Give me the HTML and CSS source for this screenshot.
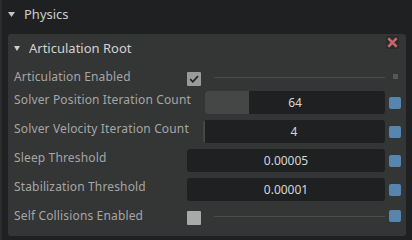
FILE: index.html
```html
<!DOCTYPE html>
<html>
<head>
<meta charset="utf-8">
<link rel="stylesheet" href="styles.css">
</head>
<body>
<div class="root">
  <div class="section-header">
    <svg class="tri" width="7" height="5" viewBox="0 0 7 5"><polygon points="0,0 7,0 3.5,5" fill="#c4c4c4"/></svg>
    <span class="section-title">Physics</span>
  </div>
  <div class="panel">
    <div class="panel-header">
      <svg class="tri tri-panel" width="6" height="5" viewBox="0 0 6 5"><polygon points="0,0 6,0 3,5" fill="#cfcfcf"/></svg>
      <span class="panel-title">Articulation Root</span>
      <div class="close">
        <svg width="13" height="13" viewBox="0 0 13 13"><rect width="13" height="13" rx="2" fill="#2a2b2b"/><path d="M3.2 3.2 L9.8 9.8 M9.8 3.2 L3.2 9.8" stroke="#c4676c" stroke-width="2.6" stroke-linecap="square"/></svg>
      </div>
    </div>
    <div class="rows">
      <div class="row row-check row-first">
        <span class="label">Articulation Enabled</span>
        <span class="checkbox checked">
          <svg width="14" height="14" viewBox="0 0 14 14"><polyline points="3.2,7.2 5.8,9.8 11,4.2" fill="none" stroke="#262626" stroke-width="1.8"/></svg>
        </span>
        <span class="line"></span>
        <span class="ind"><span class="ind-default"></span></span>
      </div>
      <div class="row">
        <span class="label">Solver Position Iteration Count</span>
        <div class="field"><span class="fill" style="width:24.5%"></span><span class="val">64</span></div>
        <span class="ind"><span class="ind-blue"></span></span>
      </div>
      <div class="row">
        <span class="label">Solver Velocity Iteration Count</span>
        <div class="field"><span class="fill" style="width:1.2%"></span><span class="val">4</span></div>
        <span class="ind"><span class="ind-blue"></span></span>
      </div>
      <div class="row">
        <span class="label">Sleep Threshold</span>
        <div class="field"><span class="val">0.00005</span></div>
        <span class="ind"><span class="ind-blue"></span></span>
      </div>
      <div class="row">
        <span class="label">Stabilization Threshold</span>
        <div class="field"><span class="val">0.00001</span></div>
        <span class="ind"><span class="ind-blue"></span></span>
      </div>
      <div class="row row-check row-last">
        <span class="label">Self Collisions Enabled</span>
        <span class="checkbox"></span>
        <span class="line"></span>
        <span class="ind"><span class="ind-blue ind-up"></span></span>
      </div>
    </div>
  </div>
</div>
</body>
</html>
```
FILE: styles.css
```css
html, body {
  margin: 0;
  padding: 0;
}
body {
  width: 412px;
  height: 240px;
  overflow: hidden;
  background: #1f2022;
  font-family: "Noto Sans", "DejaVu Sans", sans-serif;
}
.root {
  height: 240px;
  box-sizing: border-box;
  border-left: 2px solid #2b2c2d;
  padding: 0 6px 0 6px;
}
.section-header {
  height: 29px;
  display: flex;
  align-items: center;
  margin-bottom: 5px;
}
.tri {
  display: block;
  flex: 0 0 auto;
}
.section-header .tri {
  margin-left: 0;
  margin-right: 9px;
  margin-top: 0;
}
.section-title {
  color: #cdcdcd;
  font-size: 13px;
  line-height: 17px;
}
.panel {
  background: #343535;
  border-radius: 3px;
  height: 202px;
  box-sizing: border-box;
  padding: 0 5px 0 6px;
}
.panel-header {
  height: 28px;
  display: flex;
  align-items: center;
  position: relative;
}
.tri-panel {
  margin-left: 0;
  margin-right: 9px;
  margin-top: 1px;
}
.panel-title {
  color: #d2d2d2;
  font-size: 13px;
  line-height: 17px;
  flex: 1;
}
.close {
  align-self: flex-start;
  margin-top: 2px;
  margin-right: 2px;
  width: 13px;
  height: 13px;
}
.close svg { display: block; }
.rows {
  margin-top: 5px;
  display: flex;
  flex-direction: column;
}
.row {
  height: 23px;
  display: flex;
  align-items: center;
  margin-top: 6px;
}
.row-first { margin-top: 0; }
.rows .row:nth-child(2) { margin-top: 1px; }
.row-last { margin-top: 5px; }
.label {
  flex: 0 0 auto;
  min-width: 159px;
  margin-right: 14px;
  align-self: flex-start;
  color: #a6a6a6;
  font-size: 12px;
  letter-spacing: 0.15px;
  line-height: 17px;
}
.row-check .label {
  padding-top: 1px;
}
.field {
  flex: 1;
  height: 23px;
  background: #1f2022;
  border-radius: 3px;
  position: relative;
  overflow: hidden;
  display: flex;
  align-items: center;
  justify-content: center;
}
.fill {
  position: absolute;
  left: 0;
  top: 0;
  bottom: 0;
  background: #454646;
}
.val {
  position: relative;
  color: #d6d6d6;
  font-size: 12px;
  line-height: 16px;
}
.ind {
  flex: 0 0 12px;
  width: 12px;
  height: 13px;
  margin-left: 4px;
  display: flex;
  align-items: center;
  justify-content: center;
}
.ind-blue {
  width: 12px;
  height: 12px;
  border-radius: 2px;
  background: #5686b0;
}
.ind-up { margin-top: -3px; }
.ind-default {
  width: 5px;
  height: 5px;
  background: #565757;
  margin-top: -4px;
  margin-left: 1px;
}
.checkbox {
  flex: 0 0 auto;
  width: 14px;
  height: 14px;
  border-radius: 1px;
  background: #a9a9a9;
}
.checkbox.checked {
  background: #999a9a;
}
.checkbox svg { display: block; }
.line {
  flex: 1;
  height: 1px;
  background: #4b4c4c;
  margin-left: 13px;
  margin-bottom: 3px;
}
```
